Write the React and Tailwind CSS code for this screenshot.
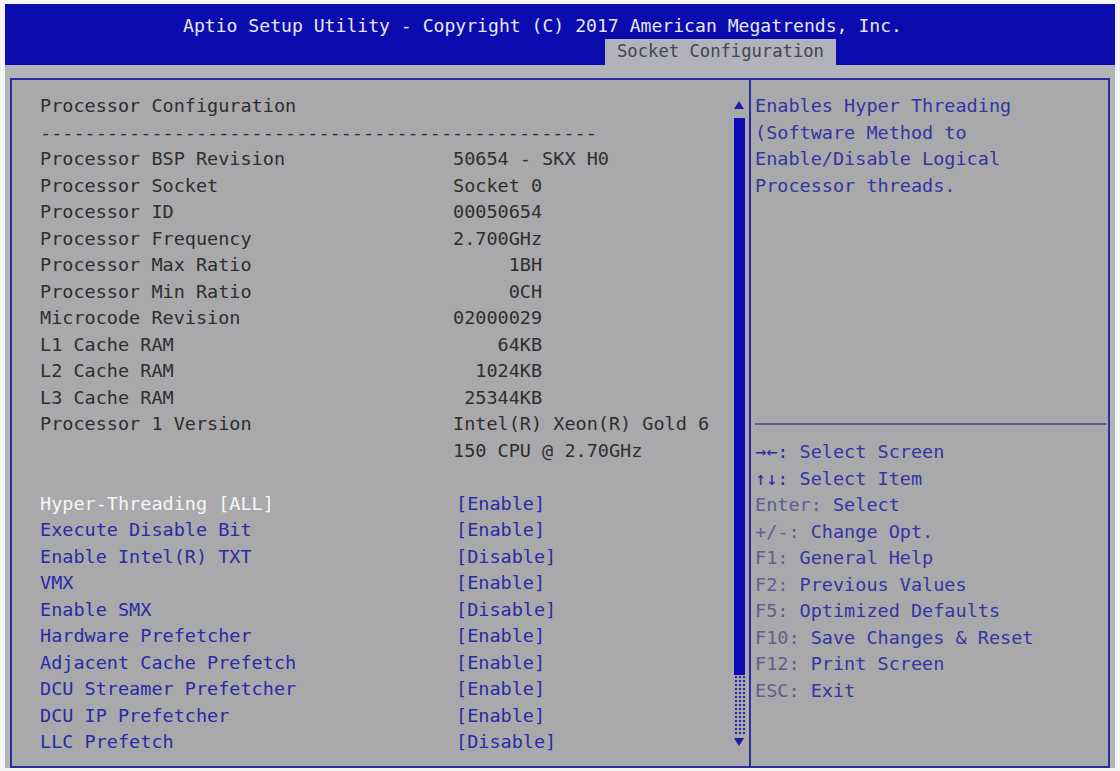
import React from "react";

const info = [
  ["Processor BSP Revision", "50654 - SKX H0"],
  ["Processor Socket", "Socket 0"],
  ["Processor ID", "00050654"],
  ["Processor Frequency", "2.700GHz"],
  ["Processor Max Ratio", "     1BH"],
  ["Processor Min Ratio", "     0CH"],
  ["Microcode Revision", "02000029"],
  ["L1 Cache RAM", "    64KB"],
  ["L2 Cache RAM", "  1024KB"],
  ["L3 Cache RAM", " 25344KB"],
  ["Processor 1 Version", "Intel(R) Xeon(R) Gold 6"],
  ["", "150 CPU @ 2.70GHz"],
];

const options = [
  ["Hyper-Threading [ALL]", "[Enable]", true],
  ["Execute Disable Bit", "[Enable]"],
  ["Enable Intel(R) TXT", "[Disable]"],
  ["VMX", "[Enable]"],
  ["Enable SMX", "[Disable]"],
  ["Hardware Prefetcher", "[Enable]"],
  ["Adjacent Cache Prefetch", "[Enable]"],
  ["DCU Streamer Prefetcher", "[Enable]"],
  ["DCU IP Prefetcher", "[Enable]"],
  ["LLC Prefetch", "[Disable]"],
];

const keys = [
  ["→←:", "Select Screen"],
  ["↑↓:", "Select Item"],
  ["Enter:", "Select"],
  ["+/-:", "Change Opt."],
  ["F1:", "General Help"],
  ["F2:", "Previous Values"],
  ["F5:", "Optimized Defaults"],
  ["F10:", "Save Changes & Reset"],
  ["F12:", "Print Screen"],
  ["ESC:", "Exit"],
];

const Row = ({ label, value, labelClass = "text-[#2e2e2e]", valueClass = "text-[#2e2e2e]" }) => (
  <div className="flex h-[26.5px] items-center whitespace-pre">
    <span className={`w-[413px] shrink-0 ${labelClass}`}>{label}</span>
    <span className={valueClass}>{value}</span>
  </div>
);

export default function App() {
  return (
    <div
      className="w-[1120px] h-[771px] bg-[#f4f4f6] pt-[4px] px-[5px] pb-[3px] flex flex-col overflow-hidden"
      style={{ fontFamily: '"DejaVu Sans Mono", "Liberation Mono", monospace' }}
    >
      {/* Header bar */}
      <div className="h-[61px] bg-[#0c0cae] flex flex-col shrink-0">
        <div className="h-[31px] flex items-end pl-[178px] text-[18.1px] leading-none text-[#e6e6f4] whitespace-pre">
          Aptio Setup Utility - Copyright (C) 2017 American Megatrends, Inc.
        </div>
        <div className="mt-auto ml-[600px] w-[231px] h-[26px] bg-[#b2b2ba] flex items-center pl-[12px] text-[17.2px] text-[#444450] whitespace-pre">
          Socket Configuration
        </div>
      </div>

      {/* Grey band + main frame */}
      <div className="flex-1 bg-[#b2b2ba] pt-[13px] px-[5px] flex flex-col">
        <div className="flex-1 border-2 border-[#2c2c9c] bg-[#a9a9ab] flex text-[18.5px]">
          {/* Left pane */}
          <div className="flex w-[737px] shrink-0">
            <div className="flex-1 pl-[28px] pt-[13px] flex flex-col">
              <div className="h-[26.5px] flex items-center text-[#2e2e2e]">Processor Configuration</div>
              <div className="h-[26.5px] flex items-center text-[#2e2e2e] whitespace-pre">
                {"-".repeat(50)}
              </div>
              {info.map(([l, v], i) => (
                <Row key={i} label={l} value={v} />
              ))}
              <div className="h-[26.5px]" />
              {options.map(([l, v, sel], i) => (
                <Row
                  key={i}
                  label={l}
                  value={v}
                  labelClass={sel ? "text-[#f6f6f8]" : "text-[#2a2aa6]"}
                  valueClass="text-[#2a2aa6] pl-[3px]"
                />
              ))}
            </div>

            {/* Scrollbar */}
            <div className="w-[12px] flex flex-col items-center pt-[21px] pb-[20px] mr-[4px]">
              <div className="w-0 h-0 border-l-[5px] border-r-[5px] border-b-[8px] border-l-transparent border-r-transparent border-b-[#1a1aa8]" />
              <div className="mt-[9px] w-[11px] h-[557px] bg-[#0c0cb4]" />
              <div className="w-[11px] flex-1 bg-[radial-gradient(#2424b0_1px,transparent_1.6px)] bg-[length:4px_4px]" />
              <div className="mt-[3px] w-0 h-0 border-l-[5px] border-r-[5px] border-t-[8px] border-l-transparent border-r-transparent border-t-[#1a1aa8]" />
            </div>
          </div>

          {/* Right pane */}
          <div className="flex-1 border-l-2 border-[#2c2c9c] pl-[4px] pt-[13px] pr-[2px] flex flex-col text-[#3434a2]">
            <div className="h-[330px] flex flex-col">
              {[
                "Enables Hyper Threading",
                "(Software Method to",
                "Enable/Disable Logical",
                "Processor threads.",
              ].map((t, i) => (
                <div key={i} className="h-[26.5px] flex items-center whitespace-pre">
                  {t}
                </div>
              ))}
            </div>
            <div className="h-[2px] bg-[#5c5c8c]" />
            <div className="pt-[14px] flex flex-col">
              {keys.map(([k, d], i) => (
                <div key={i} className="h-[26.5px] flex items-center whitespace-pre">
                  <span className={i < 2 ? "text-[#2a2aa6]" : "text-[#5e5e8e]"}>{k}</span>
                  <span> {d}</span>
                </div>
              ))}
            </div>
          </div>
        </div>
      </div>
    </div>
  );
}
